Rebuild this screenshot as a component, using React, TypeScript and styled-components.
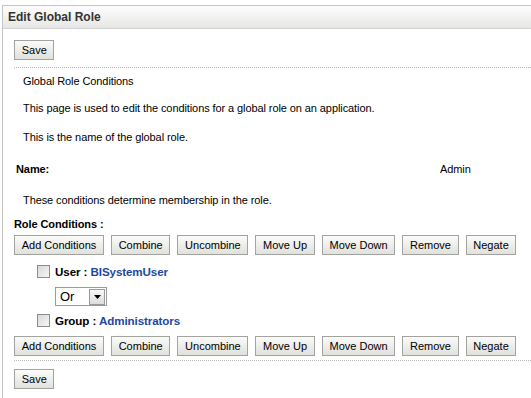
import React from "react";
import styled, { createGlobalStyle } from "styled-components";

const GlobalStyle = createGlobalStyle`
  body {
    margin: 0;
    background: #fff;
    font-family: Tahoma, "Liberation Sans", Arial, sans-serif;
    font-size: 11px;
    letter-spacing: -0.09px;
    color: #000;
  }
`;

const Panel = styled.div`
  margin: 5px 0 0 2px;
  border-top: 1px solid #c4c4c4;
  border-left: 1px solid #c4c4c4;
  min-height: 393px;
`;

const Header = styled.div`
  height: 22px;
  display: flex;
  align-items: center;
  padding-left: 5px;
  background: linear-gradient(#fdfdfd, #e6e6e4);
  border-bottom: 1px solid #d2d2d2;
  font-weight: bold;
  font-size: 12px;
  letter-spacing: 0;
  color: #333;
`;

const Body = styled.div`
  padding-left: 11px;
`;

const Toolbar = styled.div<{ $top: number }>`
  display: flex;
  gap: 7px;
  margin-top: ${(p) => p.$top}px;
`;

const Button = styled.button`
  height: 20px;
  padding: 0 6.7px;
  font-family: inherit;
  font-size: 11px;
  letter-spacing: 0;
  color: #000;
  background: linear-gradient(#fbfbf9, #e0e0dc);
  border: 1px solid #a3a3a0;
  border-radius: 0;
`;

const Separator = styled.div<{ $top: number }>`
  margin-top: ${(p) => p.$top}px;
  border-top: 1px dotted #b8b8b8;
`;

const Line = styled.div<{ $top: number; $indent?: number; $bold?: boolean }>`
  margin-top: ${(p) => p.$top}px;
  padding-left: ${(p) => p.$indent ?? 0}px;
  line-height: 14px;
  font-weight: ${(p) => (p.$bold ? "bold" : "normal")};
`;

const NameRow = styled.div`
  display: grid;
  grid-template-columns: 424px auto;
  margin-top: 18px;
  padding-left: 2px;
  line-height: 14px;
`;

const Label = styled.span`
  font-weight: bold;
`;

const Condition = styled.div<{ $top: number }>`
  display: flex;
  align-items: center;
  gap: 5px;
  margin-top: ${(p) => p.$top}px;
  padding-left: 23px;
  height: 14px;
  font-weight: bold;
  font-size: 11.6px;
`;

const Check = styled.span`
  width: 11px;
  height: 11px;
  border: 1px solid #8c8c8c;
  background: linear-gradient(135deg, #d8d8d8, #f6f6f6);
`;

const Link = styled.a`
  color: #1d48a0;
  text-decoration: none;
`;

const Select = styled.div`
  margin: 9px 0 0 41px;
  width: 45px;
  height: 17px;
  border: 1px solid #9a9a9a;
  display: flex;
  align-items: center;
  justify-content: space-between;
  padding: 0 1px 0 4px;
  box-sizing: content-box;
  font-size: 13px;
`;

const Arrow = styled.span`
  width: 14px;
  height: 14px;
  border: 1px solid #9a9a9a;
  background: linear-gradient(#f8f8f8, #dcdcdc);
  display: flex;
  align-items: center;
  justify-content: center;
`;

const actions = ["Add Conditions", "Combine", "Uncombine", "Move Up", "Move Down", "Remove", "Negate"];

const ActionBar: React.FC<{ top: number }> = ({ top }) => (
  <Toolbar $top={top}>
    {actions.map((a) => (
      <Button key={a}>{a}</Button>
    ))}
  </Toolbar>
);

export default function App() {
  return (
    <>
      <GlobalStyle />
      <Panel>
        <Header>Edit Global Role</Header>
        <Body>
          <Toolbar $top={11}>
            <Button>Save</Button>
          </Toolbar>
          <Separator $top={7} />
          <Line $top={6} $indent={9}>Global Role Conditions</Line>
          <Line $top={13} $indent={9}>
            This page is used to edit the conditions for a global role on an application.
          </Line>
          <Line $top={15} $indent={9}>This is the name of the global role.</Line>
          <NameRow>
            <Label>Name:</Label>
            <span>Admin</span>
          </NameRow>
          <Line $top={17} $indent={9}>These conditions determine membership in the role.</Line>
          <Line $top={10} $bold>Role Conditions :</Line>
          <ActionBar top={4} />
          <Condition $top={9}>
            <Check />
            <span>
              User : <Link>BISystemUser</Link>
            </span>
          </Condition>
          <Select>
            <span>Or</span>
            <Arrow>
              <svg width="7" height="4" viewBox="0 0 7 4">
                <path d="M0 0h7L3.5 4z" fill="#000" />
              </svg>
            </Arrow>
          </Select>
          <Condition $top={7}>
            <Check />
            <span>
              Group : <Link>Administrators</Link>
            </span>
          </Condition>
          <ActionBar top={9} />
          <Separator $top={4} />
          <Toolbar $top={8}>
            <Button>Save</Button>
          </Toolbar>
        </Body>
      </Panel>
    </>
  );
}
